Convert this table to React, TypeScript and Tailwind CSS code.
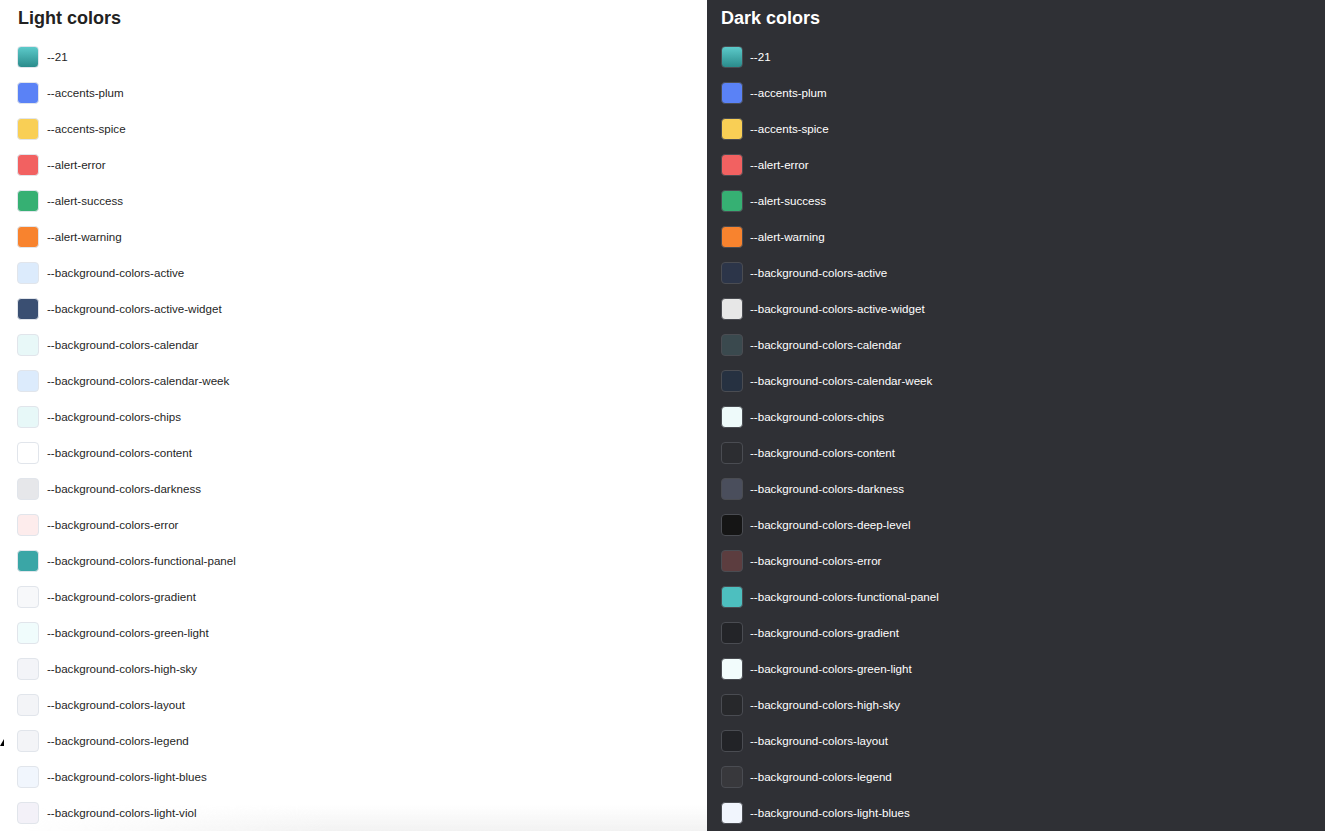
const GRADIENT_21 = "linear-gradient(to bottom, #5ccaca, #2a8b8b)";

type Swatch = { name: string; color: string };

const LIGHT: Swatch[] = [
  { name: "--21", color: GRADIENT_21 },
  { name: "--accents-plum", color: "#5a82f6" },
  { name: "--accents-spice", color: "#f9cf55" },
  { name: "--alert-error", color: "#f26161" },
  { name: "--alert-success", color: "#36b073" },
  { name: "--alert-warning", color: "#f8832e" },
  { name: "--background-colors-active", color: "#dcebfc" },
  { name: "--background-colors-active-widget", color: "#3a4f72" },
  { name: "--background-colors-calendar", color: "#e8f8f8" },
  { name: "--background-colors-calendar-week", color: "#dcebfc" },
  { name: "--background-colors-chips", color: "#e7f8f8" },
  { name: "--background-colors-content", color: "#ffffff" },
  { name: "--background-colors-darkness", color: "#e6e7ea" },
  { name: "--background-colors-error", color: "#fdecec" },
  { name: "--background-colors-functional-panel", color: "#3aa6a6" },
  { name: "--background-colors-gradient", color: "#f7f8fa" },
  { name: "--background-colors-green-light", color: "#f0fcfc" },
  { name: "--background-colors-high-sky", color: "#f3f4f8" },
  { name: "--background-colors-layout", color: "#f3f4f7" },
  { name: "--background-colors-legend", color: "#f3f4f7" },
  { name: "--background-colors-light-blues", color: "#f1f6fd" },
  { name: "--background-colors-light-viol", color: "#f3f1f8" },
];

const DARK: Swatch[] = [
  { name: "--21", color: GRADIENT_21 },
  { name: "--accents-plum", color: "#5a82f6" },
  { name: "--accents-spice", color: "#f9cf55" },
  { name: "--alert-error", color: "#f26161" },
  { name: "--alert-success", color: "#36b073" },
  { name: "--alert-warning", color: "#f8832e" },
  { name: "--background-colors-active", color: "#2c3549" },
  { name: "--background-colors-active-widget", color: "#e7e7e7" },
  { name: "--background-colors-calendar", color: "#3a494e" },
  { name: "--background-colors-calendar-week", color: "#263141" },
  { name: "--background-colors-chips", color: "#eefafa" },
  { name: "--background-colors-content", color: "#2c2d31" },
  { name: "--background-colors-darkness", color: "#4a4e5c" },
  { name: "--background-colors-deep-level", color: "#151515" },
  { name: "--background-colors-error", color: "#5c3d3f" },
  { name: "--background-colors-functional-panel", color: "#4dbfbf" },
  { name: "--background-colors-gradient", color: "#232428" },
  { name: "--background-colors-green-light", color: "#f2fcfc" },
  { name: "--background-colors-high-sky", color: "#27282b" },
  { name: "--background-colors-layout", color: "#222327" },
  { name: "--background-colors-legend", color: "#38383c" },
  { name: "--background-colors-light-blues", color: "#f1f5fd" },
];

function ColorList({ title, items, dark }: { title: string; items: Swatch[]; dark?: boolean }) {
  return (
    <div className="relative z-10">
      <h2
        className={`h-[39px] pt-[9px] text-[18px] leading-[18px] font-bold ${
          dark ? "text-white" : "ml-px text-[#222]"
        }`}
      >
        {title}
      </h2>
      <ul>
        {items.map((s) => (
          <li key={s.name} className={`flex h-9 items-center ${dark ? "gap-[7px]" : "gap-2"}`}>
            <span
              className={`h-[22px] w-[22px] shrink-0 rounded-[4px] border ${
                dark ? "border-[#4a4c52]" : "border-[#e1e5eb]"
              }`}
              style={{ background: s.color }}
            />
            <span className={`text-[11.6px] ${dark ? "text-white font-medium" : "text-[#1f1f1f]"}`}>
              {s.name}
            </span>
          </li>
        ))}
      </ul>
    </div>
  );
}

export default function App() {
  return (
    <div
      className="relative flex h-[831px] overflow-hidden"
      style={{ fontFamily: '"Liberation Sans", Arial, Helvetica, sans-serif' }}
    >
      {/* Light */}
      <section className="relative w-[707px] shrink-0 bg-white pl-[17px]">
        <ColorList title="Light colors" items={LIGHT} />
        <div className="pointer-events-none absolute bottom-0 left-[20px] right-0 h-[26px] bg-gradient-to-t from-[#f2f2f2] to-transparent [mask-image:linear-gradient(to_right,transparent,black_45%)]" />
        <svg className="absolute left-0 top-[736px]" width="5" height="10" viewBox="0 0 5 10">
          <polygon points="0,10 4,3 4,10" fill="#000" />
        </svg>
      </section>

      {/* Dark */}
      <section className="flex-1 bg-[#2f3035] pl-[14px]">
        <ColorList title="Dark colors" items={DARK} dark />
      </section>
    </div>
  );
}
